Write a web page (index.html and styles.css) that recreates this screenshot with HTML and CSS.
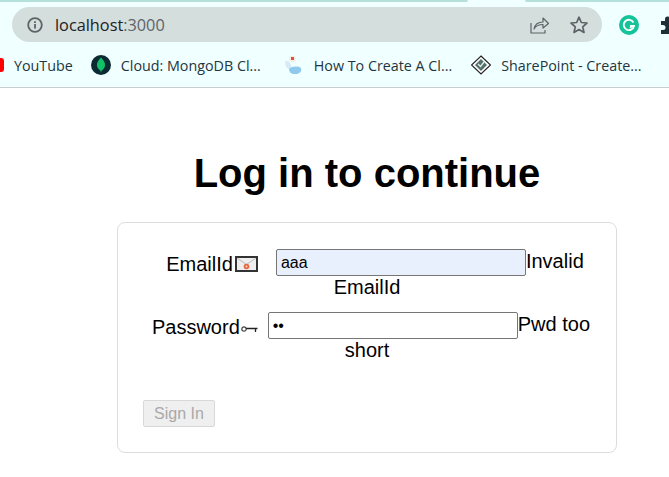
FILE: index.html
```html
<!DOCTYPE html>
<html lang="en">
<head>
    <meta charset="UTF-8">
    <meta name="viewport" content="width=device-width, initial-scale=1.0">
    <title>Log in to continue</title>
    <link rel="stylesheet" href="styles.css">
</head>
<body>

<div class="chrome">
    <div class="tabstrip">
        <div class="tab-edge tab-edge-left"></div>
        <div class="tab-edge tab-edge-right"></div>
    </div>
    <div class="toolbar">
        <div class="omnibox">
            <svg class="info-icon" width="16" height="16" viewBox="0 0 16 16">
                <circle cx="8" cy="8" r="6.8" fill="none" stroke="#5f6368" stroke-width="1.8"/>
                <rect x="7.100" y="7" width="1.8" height="4.6" fill="#5f6368"/>
                <rect x="7.100" y="4.200" width="1.8" height="1.8" fill="#5f6368"/>
            </svg>
            <span class="url">localhost<span class="url-port">:3000</span></span>
            <svg class="share-icon" width="20" height="20" viewBox="0 0 20 20">
                <path d="M2 8v10h14v-3" fill="none" stroke="#5f6368" stroke-width="1.2"/>
                <path d="M5 14c1-5 4-7 9-7V3l5.500 5.500L14 13V9.500c-4 0-7 1-9 4.500z" fill="none" stroke="#5f6368" stroke-width="1.2" stroke-linejoin="round"/>
            </svg>
            <svg class="star-icon" width="20" height="20" viewBox="0 0 20 20">
                <path d="M10 2.200l2.300 5.300 5.700.5-4.300 3.800 1.300 5.600L10 14.500l-5 2.900 1.300-5.600L2 8l5.700-.5z" fill="none" stroke="#5f6368" stroke-width="1.700" stroke-linejoin="round"/>
            </svg>
        </div>
        <svg class="grammarly" width="20" height="20" viewBox="0 0 20 20">
            <circle cx="10" cy="10" r="10" fill="#15c39a"/>
            <path d="M14.500 7.500A5.200 5.200 0 1 0 15 11h-4" fill="none" stroke="#fff" stroke-width="1.800"/>
            <path d="M11 13l3-2.500" fill="none" stroke="#fff" stroke-width="1.500"/>
        </svg>
        <svg class="puzzle" width="20" height="20" viewBox="0 0 20 20">
            <path d="M1 6h4V4a2.500 2.500 0 0 1 5 0v2h5v5h2a2.500 2.500 0 0 1 0 5h-2v3H1v-4h2a2.500 2.500 0 0 0 0-5H1z" fill="#1f2f36"/>
        </svg>
    </div>
    <div class="bookmarks">
        <div class="bookmark bookmark-yt">
            <svg width="16" height="16" viewBox="0 0 16 16"><rect y="1" width="16" height="14" rx="3" fill="#f00"/></svg>
            <span>YouTube</span>
        </div>
        <div class="bookmark bookmark-mongo">
            <svg width="20" height="20" viewBox="0 0 20 20">
                <circle cx="10" cy="10" r="10" fill="#0b2b33"/>
                <path d="M10 2.500c3 3 4.200 5.500 4 8-.2 2.500-2 4-3.400 5L10 18l-.6-2.500C8 14.500 6.200 13 6 10.500c-.2-2.500 1-5 4-8z" fill="#13c06a"/>
            </svg>
            <span>Cloud: MongoDB Cl...</span>
        </div>
        <div class="bookmark bookmark-how">
            <svg width="18" height="20" viewBox="0 0 18 20">
                <rect x="5" y="1" width="7" height="6" rx="2" fill="#f3efe6"/>
                <rect x="7" y="2" width="3" height="3" fill="#e0503a"/>
                <path d="M1 6c0 6 2 8 6 9 1-3 0-7-3-9z" fill="#d5ecf8"/>
                <path d="M5 14c3-3 9-3 12-1 1 4-2 6-6 6s-6-2-6-5z" fill="#8fc9ec"/>
            </svg>
            <span>How To Create A Cl...</span>
        </div>
        <div class="bookmark bookmark-sp">
            <svg width="20" height="20" viewBox="0 0 20 20">
                <path d="M10 1L19.500 10 10 19 .5 10z" fill="#fff" stroke="#222" stroke-width="1.200"/>
                <path d="M10 4l6 6-6 6-6-6z" fill="#54706a"/>
                <path d="M7 9l2.500 2.500L13 7" fill="none" stroke="#e6eeea" stroke-width="1.300"/>
            </svg>
            <span>SharePoint - Create...</span>
        </div>
    </div>
</div>

<div class="page">
    <h1>Log in to continue</h1>
    <form class="card">
        <div class="field">
            <label class="field-label email-label">EmailId<svg class="email-icon" width="23" height="16" viewBox="0 0 23 16">
                <rect x="1" y="1" width="21" height="14" fill="#eee" stroke="#333" stroke-width="2"/>
                <path d="M2 2l9.500 6.500L21 2" fill="none" stroke="#bbb"/>
                <circle cx="11.500" cy="10.500" r="2.800" fill="#e8663e"/>
                <circle cx="11.500" cy="10.500" r="1" fill="#f6d9cc"/>
            </svg></label><input class="text-input autofilled" type="text" value="aaa"><span class="error">Invalid EmailId</span>
        </div>
        <div class="field">
            <label class="field-label pwd-label">Password<svg class="key-icon" width="17" height="8" viewBox="0 0 17 8">
                <circle cx="3" cy="4" r="2.200" fill="none" stroke="#444" stroke-width="1.200"/>
                <path d="M5 3.500h11.500M14.500 3.500V7" fill="none" stroke="#222" stroke-width="1.300"/>
            </svg></label><input class="text-input" type="password" value="aa"><span class="error">Pwd too short</span>
        </div>
        <button class="signin-btn" type="button" disabled>Sign In</button>
    </form>
</div>

</body>
</html>
```

FILE: styles.css
```css
body {
    margin: 0;
    background-color: #fff;
    font-family: "Liberation Sans", Arial, sans-serif;
    overflow: hidden;
}

/* browser bar */
.chrome {
    height: 87px;
    background-color: #f0ffff;
    border-bottom: 1px solid #c8cdcd;
    overflow: hidden;
    font-family: "Open Sans", "Noto Sans", sans-serif;
}

.tabstrip {
    display: flex;
    justify-content: space-between;
    height: 2px;
}

.tab-edge {
    background-color: #b5e0dc;
}

.tab-edge-left {
    width: 468px;
    border-bottom-right-radius: 6px;
}

.tab-edge-right {
    width: 144px;
    border-bottom-left-radius: 6px;
}

.toolbar {
    display: flex;
    align-items: center;
    height: 35px;
    margin-top: 5px;
    padding-left: 12px;
}

.omnibox {
    display: flex;
    align-items: center;
    width: 590px;
    height: 35px;
    flex-shrink: 0;
    background-color: #d3dedd;
    border-radius: 18px;
    box-sizing: border-box;
    padding-left: 15px;
}

.info-icon {
    flex-shrink: 0;
}

.url {
    margin-left: 12px;
    font-size: 16.3px;
    color: #202124;
    flex: 1;
}

.url-port {
    color: #5f6368;
}

.share-icon {
    margin-right: 20px;
}

.star-icon {
    margin-right: 13px;
}

.grammarly {
    margin-left: 17px;
    flex-shrink: 0;
}

.puzzle {
    margin-left: 21px;
    flex-shrink: 0;
}

.bookmarks {
    display: flex;
    align-items: center;
    height: 30px;
    margin-top: 8px;
    margin-left: -12px;
    font-size: 14.3px;
    color: #1f3540;
}

.bookmark {
    display: flex;
    align-items: center;
    white-space: nowrap;
    flex-shrink: 0;
}

.bookmark svg {
    margin-right: 10px;
    flex-shrink: 0;
}

.bookmark-mongo {
    margin-left: 18px;
}

.bookmark-how {
    margin-left: 23px;
}

.bookmark-how svg {
    margin-right: 12px;
}

.bookmark-sp {
    margin-left: 19px;
}

/* login */
.page {
    width: 500px;
    margin-left: 117px;
}

h1 {
    margin: 62px 0 26px;
    font-size: 40px;
    line-height: 46px;
    font-weight: bold;
    text-align: center;
    color: #000;
}

.card {
    box-sizing: border-box;
    height: 231px;
    padding: 26px 25px 25px;
    border: 1px solid #ddd;
    border-radius: 8px;
}

.field {
    margin-bottom: 13px;
    font-size: 20px;
    line-height: 23px;
    text-align: center;
    color: #000;
}

/* label sits a little below the input's baseline */
.field-label {
    vertical-align: -3px;
}

.email-label {
    padding: 0 18px 0 16px;
}

.pwd-label {
    padding: 0 10px 0 8px;
}

.email-icon {
    margin-left: 2px;
    vertical-align: -1px;
}

.key-icon {
    margin-left: 1px;
    vertical-align: 1px;
}

.text-input {
    box-sizing: border-box;
    width: 250px;
    height: 27px;
    padding: 1px 4px;
    border: 1px solid #767676;
    border-radius: 2px;
    font-family: "Liberation Sans", Arial, sans-serif;
    font-size: 16px;
    color: #000;
    background-color: #fff;
}

.autofilled {
    background-color: #e8f0fe;
}

.signin-btn {
    display: block;
    box-sizing: border-box;
    width: 72px;
    height: 27px;
    margin-top: 38px;
    padding: 0;
    border: 1px solid #d8d8d8;
    border-radius: 2px;
    background-color: #efefef;
    font-family: "Liberation Sans", Arial, sans-serif;
    font-size: 16px;
    color: #a9a9a9;
}
```
